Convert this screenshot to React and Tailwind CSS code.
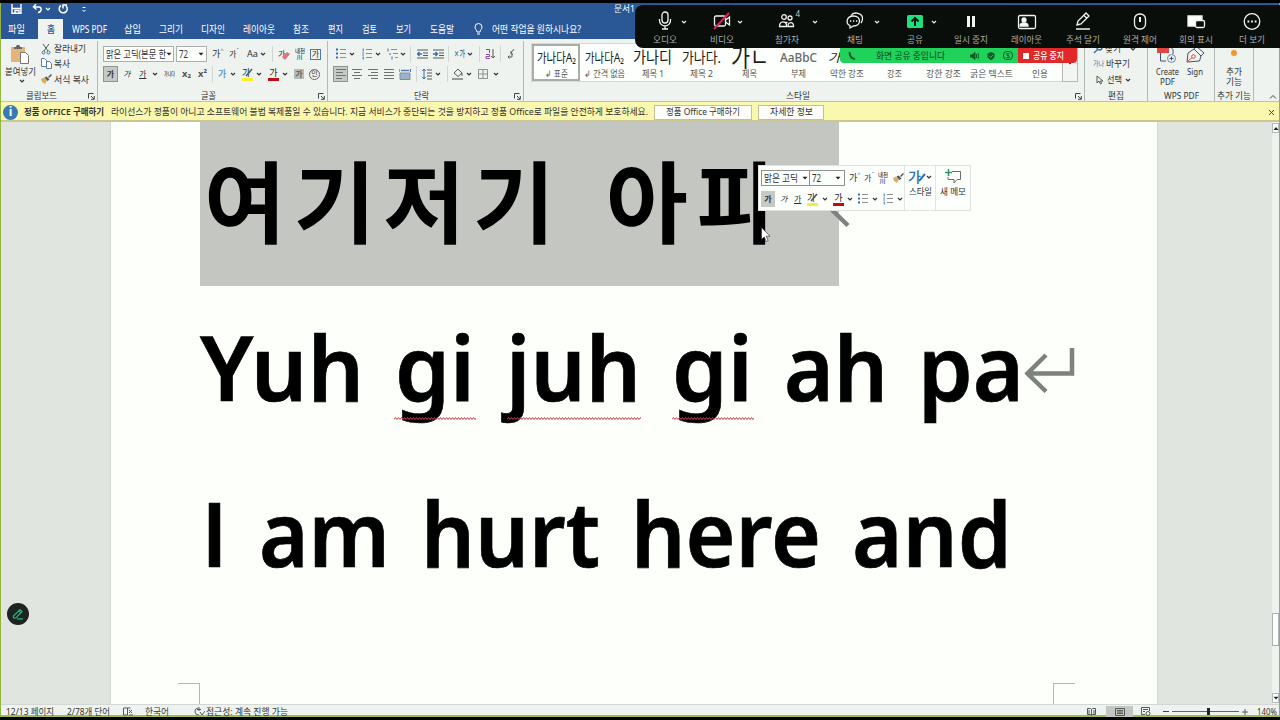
import React, { useLayoutEffect, useRef } from 'react';

// Text fitted horizontally to the width of its own box.
function Fit({ children, className = '' }) {
  const outer = useRef(null);
  const inner = useRef(null);
  useLayoutEffect(() => {
    inner.current.style.transform = 'none';
    const want = outer.current.getBoundingClientRect().width;
    const have = inner.current.getBoundingClientRect().width;
    inner.current.style.transform = `scaleX(${want / have})`;
  });
  return (
    <span ref={outer} className={`inline-block shrink-0 whitespace-nowrap text-left ${className}`}>
      <span ref={inner} className="inline-block origin-left whitespace-pre">{children}</span>
    </span>
  );
}

function Svg({ w = 12, h = 12, className = '', children, stroke = '#555b57', sw = 1 }) {
  return (
    <svg width={w} height={h} viewBox={`0 0 ${w} ${h}`} fill="none" stroke={stroke} strokeWidth={sw} className={`block shrink-0 ${className}`}>
      {children}
    </svg>
  );
}

const Chev = ({ className = '', stroke = '#333' }) => (
  <Svg w={6} h={6} stroke={stroke} sw={1.2} className={className}><path d="M1 2l2 2 2-2" /></Svg>
);
const Tri = ({ className = '' }) => (
  <Svg w={6} h={6} stroke="none" className={className}><path d="M.5 1.800h5L3 4.500z" fill="#222" /></Svg>
);
const Sep = ({ className = '' }) => <div className={`h-4 w-px shrink-0 bg-[#d0d5d1] ${className}`} />;
const Launcher = () => (
  <Svg w={7} h={7} stroke="#444"><path d="M.5 5.5v-5h5M3 3l3 3M6.3 3v3.3H3" /></Svg>
);

const Bullets = ({ className = '', numbered }) => (
  <Svg w={10} h={12} stroke="#8a908c" className={className}>
    <path d="M4 1.5h6M4 5.500h6M4 9.500h6" />
    {numbered ? <path d="M1.2 .5v3M.3 5h1.6M.3 7h1.6M1.2 8.5v3" stroke="#3a6fae" /> : <path d="M0 1.500h2M0 5.500h2M0 9.500h2" stroke="#3a6fae" strokeWidth="2" />}
  </Svg>
);
const Lines = ({ d, className = '' }) => <Svg w={10} h={12} stroke="#6c726e" className={className}><path d={d} /></Svg>;
const Brush = ({ className = '' }) => (
  <Svg w={11} h={11} stroke="none" className={className}>
    <path d="M0 5l3-1.5 3 3L4 10 1 8z" fill="#e0ac62" /><path d="M3.5 3.5l2-1 3 3-2 1.5z" fill="#555" /><path d="M7 3l3-3 1 1-3 3z" fill="#555" />
  </Svg>
);
const Highlight = ({ className = '' }) => (
  <div className={`flex h-[13px] w-[11px] shrink-0 flex-col justify-between ${className}`}>
    <div className="relative h-[9px] text-[9px] leading-[9px] text-[#222]">가
      <Svg w={11} h={10} stroke="#555" sw={1.6} className="absolute left-0 top-0"><path d="M10 1L4 8" /></Svg>
    </div>
    <div className="h-[3px] bg-[#f6ef2a]" />
  </div>
);
const FontColor = ({ className = '' }) => (
  <div className={`flex h-[13px] w-[11px] shrink-0 flex-col justify-between text-center text-[9px] leading-[9px] text-[#222] ${className}`}>
    <span>가</span><div className="h-[3px] bg-[#c00b12]" />
  </div>
);

const tabs = [
  ['WPS PDF', 'ml-[9px] w-[35px]'], ['삽입', 'ml-[17px] w-[17px]'], ['그리기', 'ml-[18px] w-[24px]'], ['디자인', 'ml-[18px] w-[24px]'],
  ['레이아웃', 'ml-[18px] w-[32px]'], ['참조', 'ml-[18px] w-[16px]'], ['편지', 'ml-[19px] w-[15px]'], ['검토', 'ml-[19px] w-[15px]'],
  ['보기', 'ml-[19px] w-[15px]'], ['도움말', 'ml-[19px] w-[24px]'],
];

function Header() {
  return (
    <header className="h-9 shrink-0 bg-[#2a5796] text-white">
      <div className="flex h-4 items-center pl-[10px]">
        <Svg w={11} h={10} stroke="#fff" sw={1.4} className="-mt-1"><path d="M1 0v9.300h9V0M1 4.500h9M4 9V6.500h4V9" /></Svg>
        <Svg w={11} h={10} stroke="#fff" sw={1.5} className="-mt-1 ml-[10px]"><path d="M4 0L1.5 3 4.5 5.5M1.5 3H7c3 0 3 5-1 5.500" /></Svg>
        <Chev stroke="#fff" className="-mt-1 ml-[2px]" />
        <Svg w={11} h={10} stroke="#fff" sw={1.5} className="-mt-1 ml-[7px]"><path d="M3 1.500a4 4 0 1 0 5 .5M5 4.500V1h4" /></Svg>
        <Svg w={6} h={7} stroke="#fff" className="-mt-[3px] ml-[12px]"><path d="M1.500 1.500h3M1.500 4l1.500 1.500L4.500 4" /></Svg>
        <Fit className="-mt-[5px] ml-[527px] w-[21px] text-[9px] leading-3">문서1</Fit>
      </div>
      <nav className="flex h-5 items-center pl-[7px] text-[10px] leading-5">
        <Fit className="w-[17px]">파일</Fit>
        <div className="ml-[13px] flex h-full w-[25px] justify-center bg-[#f0f4f1] font-medium text-[#2a5796]"><Fit className="w-[8px]">홈</Fit></div>
        {tabs.map(([t, c]) => <Fit key={t} className={c}>{t}</Fit>)}
        <Svg w={9} h={13} stroke="#fff" className="ml-5"><path d="M3 9C3 7 1 6.500 1 4a3.500 3.500 0 0 1 7 0C8 6.500 6 7 6 9zM3 11h3" /></Svg>
        <Fit className="ml-[9px] w-[89px]">어떤 작업을 원하시나요?</Fit>
      </nav>
    </header>
  );
}

const Group = ({ className, label, labelClass, launcher, children }) => (
  <section className={`flex h-[60px] shrink-0 flex-col border-r border-[#b3b9b4] ${className}`}>
    <div className="h-[48px] shrink-0">{children}</div>
    <div className="flex h-3 items-center">
      <span className="flex grow justify-center"><Fit className={`mt-[2px] leading-3 ${labelClass}`}>{label}</Fit></span>
      {launcher && <div className="mr-[2px] mt-[2px]"><Launcher /></div>}
    </div>
  </section>
);

const styles = [
  ['가나다A₂', '↲ 표준', 'text-[13px]', 'w-[39px]', 'w-[23px]'],
  ['가나다A₂', '↲ 간격 없음', 'text-[13px]', 'w-[39px]', 'w-[41px]'],
  ['가나디', '제목 1', 'text-[16px]', 'w-[39px]', 'w-[22px]'],
  ['가나다.', '제목 2', 'text-[15px]', 'w-[39px]', 'w-[23px]'],
  ['가ㄴ', '제목', 'text-[26px]', 'w-[38px]', 'w-[15px]'],
  ['AaBbC', '부제', 'text-[13px] font-medium text-[#666] line-through', 'w-[37px]', 'w-[15px]'],
  ['가나다', '약한 강조', 'text-[12px] italic', 'w-[37px]', 'w-[34px]'],
  ['', '강조', 'text-[12px]', 'w-[37px]', 'w-[15px]'],
  ['', '강한 강조', 'text-[12px]', 'w-[37px]', 'w-[35px]'],
  ['', '굵은 텍스트', 'text-[12px]', 'w-[37px]', 'w-[43px]'],
  ['', '인용', 'text-[12px]', 'w-[37px]', 'w-[16px]'],
];

function Ribbon() {
  return (
    <div className="flex h-[63px] shrink-0 border-b border-[#c9c58e] bg-[#eff3f0] pt-[2px] text-[9px] leading-3 text-[#333]">
      <Group className="w-[97px]" label="클립보드" labelClass="ml-[-7px] w-[31px]" launcher>
        <div className="flex">
          <div className="flex w-[38px] flex-col items-center pt-[3px]">
            <Svg w={20} h={21} stroke="none"><path d="M1 3h14v15H1z" fill="#e3b579" /><path d="M4 3h2c0-3 4-3 4 0h2v2H4z" fill="#666" /><path d="M10.500 8.500h5l3 3v8h-8z" fill="#fff" stroke="#777" /></Svg>
            <Fit className="mt-px w-[31px] leading-[11px]">붙여넣기</Fit>
            <Chev className="ml-1 mt-px" />
          </div>
          <div className="flex flex-col pl-[2px] text-[9.5px]">
            <div className="flex h-[15px] items-center"><Svg w={10} h={12}><path d="M2 1l5 7M8 1L3 8" /><circle cx="2.500" cy="9.500" r="1.500" stroke="#3a6fae" /><circle cx="7.500" cy="9.500" r="1.500" stroke="#3a6fae" /></Svg><Fit className="ml-[3px] w-[32px]">잘라내기</Fit></div>
            <div className="flex h-[15px] items-center"><Svg w={11} h={11}><path d="M.5.5h3l2 2v6h-5zM5.500 3.500h3l2 2v5h-5z" fill="#fff" stroke="#5c7ea8" /></Svg><Fit className="ml-[2px] w-[16px]">복사</Fit></div>
            <div className="flex h-[17px] items-center"><Brush /><Fit className="ml-[2px] w-[35px]">서식 복사</Fit></div>
          </div>
        </div>
      </Group>

      <Group className="w-[230px]" label="글꼴" labelClass="w-[15px]" launcher>
        <div className="flex h-[25px] items-center pl-[5px] pt-[1px]">
          <div className="flex h-4 w-[71px] items-center justify-between overflow-hidden border border-[#aab0ab] bg-[#fcfffc] pl-[2px] pr-[1px]"><Fit className="w-[60px] text-[10px]">맑은 고딕(본문 한</Fit><Tri /></div>
          <div className="ml-[2px] flex h-4 w-[31px] items-center justify-between border border-[#aab0ab] bg-[#fcfffc] pl-[2px] pr-[2px] text-[10px]"><Fit className="w-[9px]">72</Fit><Tri /></div>
          <div className="ml-[5px] flex w-[10px] text-[9px]">가<span className="-mt-1 text-[6px] text-[#3a6fae]">^</span></div>
          <div className="ml-[7px] flex w-[10px] text-[8px]">가<span className="-mt-1 text-[6px] text-[#3a6fae]">ˇ</span></div>
          <Fit className="ml-2 w-[11px] text-[9.5px]">Aa</Fit><Chev className="ml-[2px]" />
          <Sep className="ml-[6px]" />
          <div className="relative ml-[5px] w-3 text-[8px]">가<Svg w={8} h={8} stroke="none" className="absolute left-[4px] top-[4px]"><path d="M0 5l5-5 3 2-5 6z" fill="#e56e80" /></Svg></div>
          <div className="ml-[4px] flex w-[11px] flex-col items-center text-[6px] leading-[6px]"><Fit className="w-[10px] font-medium">내천</Fit><span className="font-bold text-[#3a6fae]">川</span></div>
          <div className="ml-[5px] flex h-[11px] w-[11px] items-center justify-center border border-[#4f79a8] text-[8px]">가</div>
        </div>
        <div className="flex h-4 items-center pl-[5px]">
          <div className="flex h-4 w-[15px] items-center justify-center border border-[#8e9490] bg-[#c6cac6] text-[8px] font-bold">가</div>
          <span className="ml-[5px] w-[8px] text-[8px] italic">가</span>
          <span className="ml-[8px] w-[8px] text-[8px] leading-[10px] underline">가</span>
          <Chev className="ml-[5px]" />
          <Fit className="ml-[6px] w-[11px] text-[6px] font-medium line-through">가나다</Fit>
          <Fit className="ml-[7px] w-[9px] font-bold text-[#555]">x₂</Fit>
          <Fit className="ml-[7px] w-[9px] font-bold text-[#555]">x²</Fit>
          <Sep className="ml-[5px]" />
          <span className="ml-[5px] w-[9px] text-[9px] font-bold text-[#6d9dcb]">가</span><Chev className="ml-[3px]" />
          <Highlight className="ml-[6px]" /><Chev className="ml-[3px]" />
          <FontColor className="ml-[6px]" /><Chev className="ml-[3px]" />
          <span className="ml-[6px] flex h-[10px] w-[10px] items-center justify-center bg-[#b6bab6] text-[8px]">가</span>
          <span className="ml-[5px] flex h-[11px] w-[11px] items-center justify-center rounded-full border border-[#666] text-[7px]">인</span>
        </div>
      </Group>

      <Group className="w-[196px]" label="단락" labelClass="w-[15px]" launcher>
        <div className="flex h-[25px] items-center pl-[8px] pt-[1px]">
          <Bullets /><Chev className="ml-[3px]" />
          <Bullets numbered className="ml-[7px]" /><Chev className="ml-[3px]" />
          <Svg w={11} h={12} stroke="#8a908c" className="ml-[6px]"><path d="M4 1.500h6M6 5.500h5M8 9.500h3" /><path d="M1 .5v3M3 5v2M5 8.500v3" stroke="#3a6fae" /></Svg><Chev className="ml-[2px]" />
          <Sep className="ml-[4px]" />
          <Svg w={11} h={10} className="ml-[6px]"><path d="M0 1h11M6 4h5M6 6.500h5M0 9h11" /><path d="M5 5H.5M2.500 3l-2 2 2 2" stroke="#2f6eb3" strokeWidth="1.300" /></Svg>
          <Svg w={11} h={10} className="ml-[5px]"><path d="M0 1h11M6 4h5M6 6.500h5M0 9h11" /><path d="M0 5h4.500M2.500 3l2 2-2 2" stroke="#2f6eb3" strokeWidth="1.300" /></Svg>
          <Sep className="ml-[4px]" />
          <Fit className="ml-[5px] w-[11px] text-[9px]"><span className="text-[#2f6eb3]">✕</span>가</Fit><Chev className="ml-[2px]" />
          <Sep className="ml-[6px]" />
          <Svg w={10} h={12} className="ml-[5px]"><path d="M8 1v9M6 8l2 2 2-2" /><path d="M1 1.500h3.500V5" stroke="#2f6eb3" /><path d="M1 6.500h3.500v2H1v2h4" stroke="#8b4b9d" /></Svg>
          <Sep className="ml-[5px]" />
          <Svg w={8} h={11} className="ml-[6px]"><path d="M7 0L4 4M4 2v3h2M5 5v3H1M2.500 6.500L1 8l1.500 1.500" /></Svg>
        </div>
        <div className="flex h-4 items-center pl-[5px]">
          <div className="flex h-4 w-[15px] items-center justify-center border border-[#8e9490] bg-[#c6cac6]"><Lines d="M0 1.500h10M0 4.500h7M0 7.500h10M0 10.500h6" /></div>
          <Lines className="ml-[4px]" d="M0 1.500h10M2 4.500h6M0 7.500h10M2 10.500h6" />
          <Lines className="ml-[6px]" d="M0 1.500h10M3 4.500h7M0 7.500h10M3 10.500h7" />
          <Lines className="ml-[6px]" d="M0 1.500h10M0 4.500h10M0 7.500h10M0 10.500h10" />
          <Svg w={12} h={12} className="ml-[5px]" stroke="#4d7fb5"><path d="M0 1v3M11.500 1v3M2 2.500h8" strokeWidth="1.400" /><path d="M1 5h10v6.500H1z" fill="#9db2c8" stroke="#7d8fa3" /></Svg>
          <Sep className="ml-[5px]" />
          <Svg w={10} h={12} className="ml-[5px]"><path d="M5 2h5M5 5h5M5 8h5M5 11h5" /><path d="M2 1.500v9M.3 3L2 1l1.700 2M.3 9L2 11l1.700-2" stroke="#2f6eb3" /></Svg><Chev className="ml-[3px]" />
          <Sep className="ml-[6px]" />
          <Svg w={12} h={12} className="ml-[4px]"><path d="M2 5l4-4 4 4-4 3.500zM10 5v3" /><path d="M0 11h11" stroke="#999" strokeWidth="2" /></Svg><Chev className="ml-[2px]" />
          <Svg w={10} h={10} stroke="#8c928d" className="ml-[6px]"><path d="M.5.5h9v9h-9zM5 .5v9M.5 5h9" /></Svg><Chev className="ml-[5px]" />
        </div>
      </Group>

      <Group className="w-[561px]" label="스타일" labelClass="ml-[-4px] w-[24px]" launcher>
        <div className="flex pl-[7px] pt-[2px]">
          <div className="flex h-[39px] w-[531px] overflow-hidden border-y border-l border-[#d5d9d5] bg-[#fcfffb]">
            {styles.map(([s, n, c, w, nw], i) => (
              <div key={i} className={`flex w-[48.4px] shrink-0 flex-col items-center ${i === 0 ? 'h-[37px] border-2 border-[#a9ada9]' : 'pt-[2px]'}`}>
                <div className={`flex h-[21px] items-center text-[#1c1c1c] ${c}`}>{s && <Fit className={`mt-[2px] leading-[21px] ${w}`}>{s}</Fit>}</div>
                <Fit className={`mt-px leading-3 text-[#555] ${nw}`}>{n}</Fit>
              </div>
            ))}
          </div>
          <div className="flex h-[39px] w-[16px] items-center justify-center border border-[#b5bab6] bg-[#f2f5f2]"><Tri /></div>
        </div>
      </Group>

      <Group className="w-[63px]" label="편집" labelClass="w-[16px]">
        <div className="flex flex-col pl-[8px] text-[9.5px]">
          <div className="flex h-[15px] items-center"><Svg w={10} h={10} stroke="#3a6fae" sw={1.500}><path d="M1 9l4-4" /><circle cx="6.500" cy="3.500" r="2.500" /></Svg><Fit className="ml-[2px] w-[16px]">찾기</Fit><Chev className="ml-[9px]" /></div>
          <div className="flex h-[16px] items-center"><Fit className="w-[11px] text-[7px] text-[#3a6fae]">가나</Fit><Fit className="ml-[2px] w-[24px]">바꾸기</Fit></div>
          <div className="flex h-[15px] items-center"><Svg w={8} h={10} className="ml-[3px]"><path d="M1 1v7l2-2 1.500 3 1-.5L4.500 6H7z" /></Svg><Fit className="ml-[3px] w-[15px]">선택</Fit><Chev className="ml-[3px]" /></div>
        </div>
      </Group>

      <Group className="w-[67px]" label="WPS PDF" labelClass="w-[35px]">
        <div className="flex pl-[7px] pt-[4px]">
          <div className="flex w-[24px] flex-col items-center">
            <Svg w={20} h={21} stroke="#43526c"><path d="M3 .5h9l4 4V9M3.500 5v11H9" /><path d="M0 3h12v5H0z" fill="#e2453d" stroke="none" /><circle cx="14.500" cy="13.500" r="4" stroke="#6a88ab" /><path d="M12.500 13.500h4M14.500 11.500v4" /></Svg>
            <Fit className="mt-px w-[23px] leading-[10px]">Create</Fit><Fit className="w-[15px] leading-[10px]">PDF</Fit>
          </div>
          <div className="ml-[6px] flex w-[20px] flex-col items-center">
            <Svg w={20} h={21} stroke="#43526c"><path d="M9 4l7 7M11 1l8 7-3 3-1.500 5L2 17l1-9 6-4z" /><circle cx="8.500" cy="11.500" r="1.800" stroke="#e2453d" /><path d="M2 17l5-4.500" stroke="#e2453d" /></Svg>
            <Fit className="mt-px w-[16px] leading-[10px]">Sign</Fit>
          </div>
        </div>
      </Group>

      <Group className="w-[39px]" label="추가 기능" labelClass="w-[34px]">
        <div className="flex flex-col items-center">
          <div className="mt-[9px] h-[6px] w-[6px] rounded-full bg-[#f0962c]" />
          <Fit className="mt-[11px] w-[16px] leading-[10px]">추가</Fit><Fit className="w-[16px] leading-[10px]">기능</Fit>
        </div>
      </Group>
      <div className="flex grow items-end justify-end pb-[1px] pr-[2px]"><Svg w={8} h={6} stroke="#444"><path d="M1 4.500l3-3 3 3" /></Svg></div>
    </div>
  );
}

function NoticeBar() {
  return (
    <div className="flex h-5 shrink-0 items-center border-b-2 border-[#cbc795] bg-[#faf7ae] pl-[2px] pt-[2px] text-[9.5px] text-[#333]">
      <div className="flex h-[15px] w-[15px] items-center justify-center rounded-full bg-[#3779b5] font-sans text-[12px] font-bold leading-[14px] text-white">i</div>
      <Fit className="ml-[6px] w-[80px] font-semibold">정품 OFFICE 구매하기</Fit>
      <Fit className="ml-[7px] w-[537px]">라이선스가 정품이 아니고 소프트웨어 불법 복제품일 수 있습니다. 지금 서비스가 중단되는 것을 방지하고 정품 Office로 파일을 안전하게 보호하세요.</Fit>
      <div className="ml-[6px] flex h-[15px] w-[98px] items-center justify-center border border-[#c3c19c] bg-[#fdfefa]"><Fit className="w-[74px]">정품 Office 구매하기</Fit></div>
      <div className="ml-[6px] flex h-[15px] w-[66px] items-center justify-center border border-[#c3c19c] bg-[#fdfefa]"><Fit className="w-[43px]">자세한 정보</Fit></div>
      <Svg w={7} h={7} stroke="#444" className="ml-auto mr-[4px]"><path d="M1 1l5 5M6 1L1 6" /></Svg>
    </div>
  );
}

const Enter = ({ className }) => (
  <Svg w={52} h={46} stroke="#7e827e" sw={4.500} className={className}><path d="M48 0v25.500H4M22 7L3.500 25.500 22 43.500" /></Svg>
);
const Wavy = ({ className }) => (
  <div className={`absolute bottom-[32px] h-[3px] overflow-hidden ${className}`}>
    <Svg w={140} h={3} stroke="#cf3a42" sw={1}><path d={'M0 2.500' + 'l1.500-2l1.500 2'.repeat(46)} /></Svg>
  </div>
);

function DocumentArea() {
  return (
    <main className="relative flex h-[582px] shrink-0 bg-[#e1e5e0]">
      <div className="ml-[109px] flex w-[1048px] flex-col border-x border-[#d3d7d2] bg-[#fcfffa] text-[90px] font-semibold text-black">
        <div className="ml-[89px] h-[164px] w-[639px] bg-[#c4c7c1]">
          <div className="relative flex whitespace-nowrap pl-1 font-['Noto_Sans_CJK_KR'] text-[89px] font-bold leading-[152px] tracking-[7.8px]">
            <span className="w-[359px] shrink-0">여기저기</span>
            <span className="ml-[43px] w-[181px] shrink-0 tracking-[9px]">아파</span>
            <Enter className="absolute left-[626px] top-[60px]" />
          </div>
        </div>
        <div className="relative ml-[89px] flex h-[166px] leading-[161px] [-webkit-text-stroke:0.7px_black]">
          <Fit className="w-[164px]">Yuh</Fit>
          <Fit className="ml-[31px] w-[80px]">gi</Fit>
          <Fit className="ml-[31px] w-[135px]">juh</Fit>
          <Fit className="ml-[31px] w-[81px]">gi</Fit>
          <Fit className="ml-[31px] w-[104px]">ah</Fit>
          <Fit className="ml-[30px] w-[106px]">pa</Fit>
          <Enter className="mt-[62px]" />
          <Wavy className="left-[194px] w-[82px]" />
          <Wavy className="left-[307px] w-[134px]" />
          <Wavy className="left-[472px] w-[82px]" />
        </div>
        <div className="ml-[89px] flex h-[166px] items-baseline leading-[160px] [-webkit-text-stroke:0.7px_black]">
          <Fit className="ml-[4px] w-[21px] font-['Liberation_Sans'] text-[92px] font-bold">I</Fit>
          <Fit className="ml-[34px] w-[131px]">am</Fit>
          <Fit className="ml-[31px] w-[179px]">hurt</Fit>
          <Fit className="ml-[31px] w-[190px]">here</Fit>
          <Fit className="ml-[31px] w-[160px]">and</Fit>
        </div>
        <div className="mt-auto flex h-[21px] justify-between pl-[67px] pr-[82px]">
          <div className="w-[22px] border-r border-t border-[#b4b8b3]" />
          <div className="w-[22px] border-l border-t border-[#b4b8b3]" />
        </div>
      </div>
      <div className="ml-auto flex w-[7px] flex-col bg-[#eef1ed]">
        <div className="mt-px flex h-[10px] items-center justify-center border border-[#b5b9b5] bg-white"><Svg w={6} h={5} stroke="none"><path d="M.5 4h5L3 1z" fill="#222" /></Svg></div>
        <div className="mt-[480px] h-[33px] border border-[#adb1ad] bg-white" />
        <div className="mb-px mt-auto flex h-[10px] items-center justify-center border border-[#b5b9b5] bg-white"><Tri /></div>
      </div>

      <button className="absolute left-[6px] top-[481px] flex h-[22px] w-[22px] items-center justify-center rounded-full bg-[#1d2321]">
        <Svg w={12} h={12} stroke="#25b57c" sw={1.200}><path d="M1.500 8L8 1.500l2 2L4 10H1.500zM5 10.800h6M6.800 2.800l2 2" /></Svg>
      </button>

      <div className="absolute left-[757px] top-[43px] flex h-[46px] w-[213px] border border-[#dfe3df] bg-[#fdfffc] text-[9px] leading-3 text-[#333]">
        <div className="flex w-[146px] flex-col border-r border-[#e3e6e3]">
          <div className="flex h-[24px] items-center pl-[2px]">
            <div className="flex h-4 w-[49px] items-center justify-between border border-[#8d928e] pl-[2px] pr-px"><Fit className="w-[34px] text-[10px]">맑은 고딕</Fit><Tri /></div>
            <div className="-ml-px flex h-4 w-[36px] items-center justify-between border border-[#8d928e] pl-[2px] pr-[3px] text-[10px]"><Fit className="w-[9px]">72</Fit><Tri /></div>
            <div className="ml-[4px] flex w-[10px]">가<span className="-mt-1 text-[6px] text-[#3a6fae]">^</span></div>
            <div className="ml-[5px] flex w-[9px] text-[8px]">가<span className="-mt-1 text-[6px] text-[#3a6fae]">ˇ</span></div>
            <div className="ml-[4px] flex w-[11px] flex-col items-center text-[6px] leading-[6px]"><Fit className="w-[10px] font-medium">내천</Fit><span className="font-bold text-[#3a6fae]">川</span></div>
            <Brush className="ml-[5px]" />
          </div>
          <div className="flex h-[18px] items-center pl-[2px]">
            <div className="flex h-4 w-[14px] items-center justify-center bg-[#c6c9c6] text-[8px] font-bold">가</div>
            <span className="ml-[5px] w-[8px] text-[8px] italic">가</span>
            <span className="ml-[6px] w-[8px] text-[8px] leading-[10px] underline">가</span>
            <Highlight className="ml-[5px]" /><Chev className="ml-[4px]" />
            <FontColor className="ml-[5px]" /><Chev className="ml-[3px]" />
            <Bullets className="ml-[5px]" /><Chev className="ml-[4px]" />
            <Bullets numbered className="ml-[5px]" /><Chev className="ml-[4px]" />
          </div>
        </div>
        <div className="flex w-[31px] flex-col items-center border-r border-[#e3e6e3] pt-[3px]">
          <div className="relative flex h-[16px] w-[24px] items-center text-[14px] font-medium text-[#2f6eb3]">가
            <Svg w={14} h={14} stroke="#3d6e9e" sw={2} className="absolute left-[6px] top-[2px]"><path d="M11 3L5 10" /></Svg>
            <Chev className="ml-auto" />
          </div>
          <Fit className="mt-px w-[23px]">스타일</Fit>
        </div>
        <div className="flex grow flex-col items-center pt-[3px]">
          <Svg w={17} h={16} stroke="#6a706b"><path d="M7 2.500h8.500v8H12l-3 3.500v-3.500H3V8" /><path d="M3.500 0v7M0 3.500h7" stroke="#2f9a67" strokeWidth="1.600" /></Svg>
          <Fit className="mt-px w-[26px]">새 메모</Fit>
        </div>
      </div>
      <Svg w={11} h={17} stroke="#222" sw={0.600} className="absolute left-[760px] top-[105px]"><path d="M.5.5v12l2.700-2.500 2 4.500 2-.9-2-4.400h3.800z" fill="#fff" /></Svg>
    </main>
  );
}

function StatusBar() {
  return (
    <footer className="flex h-[13px] shrink-0 items-center border-b-2 border-t border-b-[#9dbb57] border-t-[#d4d8d4] bg-[#eff3f0] pl-[5px] pt-[3px] text-[9px] leading-[10px] text-[#333]">
      <Fit className="w-[48px]">12/13 페이지</Fit>
      <Fit className="ml-[13px] w-[43px]">2/78개 단어</Fit>
      <Svg w={11} h={9} className="ml-[13px]"><path d="M.5 1h4v7h-4zM4.500 1h3M6 3l3 3M9 3L6 6M6 8h4" /></Svg>
      <Fit className="ml-[11px] w-[24px]">한국어</Fit>
      <Svg w={11} h={9} className="ml-[25px]"><path d="M4 1a3.500 3.500 0 1 0 1 7M5 0v4M3 2.500h4M6 5l2 3 3-4" /></Svg>
      <Fit className="ml-px w-[82px]">접근성: 계속 진행 가능</Fit>
      <div className="ml-auto flex items-center">
        <Svg w={9} h={8}><path d="M.5.5h3l1 1 1-1h3v6h-3l-1 1-1-1h-3zM4.500 1v6M2 2v4M7 2v4" /></Svg>
        <div className="ml-[10px] flex h-[11px] w-[27px] items-center justify-center bg-[#c3c7c3]"><Svg w={10} h={8}><path d="M.5.5h9v7h-9zM2 2.500h6M2 4h6M2 5.500h6" /></Svg></div>
        <Svg w={10} h={9} className="ml-[8px]"><path d="M4 7.500H.5v-7h8V4M2 2.500h5M2 4.500h2" /><circle cx="7" cy="6.500" r="2" /></Svg>
        <div className="ml-[12px] h-px w-[6px] bg-[#444]" />
        <div className="ml-[3px] flex h-[8px] w-[67px] items-center justify-center"><div className="h-px w-[35px] bg-[#666]" /><div className="h-[7px] w-[3px] bg-[#222]" /><div className="h-px grow bg-[#666]" /></div>
        <Svg w={6} h={6} className="ml-[3px]"><path d="M0 3h6M3 0v6" /></Svg>
        <Fit className="ml-[9px] mr-[2px] w-[20px]">140%</Fit>
      </div>
    </footer>
  );
}

const meet = [
  ['오디오', 'ml-[5px]', 'w-[24px]', <><rect x="7" y="1" width="6" height="11" rx="3" /><path d="M4.500 8v1.500a5.500 5.500 0 0 0 11 0V8M10 15v3M7 18h6" /></>, 'right-[3px]'],
  ['비디오', 'ml-[7px]', 'w-[24px]', <><rect x="2.500" y="5" width="11" height="10" rx="1.500" /><path d="M13.500 9l4-3v8l-4-3" /><path d="M2 18L17 2" stroke="#dc2454" strokeWidth="2" /></>, 'right-[4px]'],
  ['참가자', 'ml-[14.5px]', 'w-[24px]', <><circle cx="7" cy="6" r="2.300" /><circle cx="13" cy="7" r="2" /><path d="M2.500 15.500c0-6 7-6 7-1v1zM11 15.500c-.5-5 5.500-5 5.500-1v1zM8.500 11.500l2 0" /></>, 'right-[-6px]'],
  ['채팅', 'ml-[18.5px]', 'w-[16px]', <><path d="M6 4.500C9 0 18 2 17.500 8c0 2-.7 3-1.500 4" /><path d="M8.500 5C1 5 .5 13 5 14.500l0 2.500 3.500-2c8 0 8-10 0-10z" /><path d="M5 10h1.300M8 10h1.300M11 10h1.300" strokeWidth="1.600" /></>, 'right-[0px]'],
  ['공유', 'ml-[9.5px]', 'w-[16px]', <><rect x="2" y="4" width="16" height="13" rx="1.500" fill="#1fe07f" stroke="none" /><path d="M10 15V8M6.500 10.500L10 7l3.500 3.500" stroke="#08150e" strokeWidth="2" /></>, 'right-[3px]'],
  ['일시 중지', 'ml-[6px]', 'w-[34px]', <path d="M7.500 5v11M12.500 5v11" strokeWidth="3" />],
  ['레이아웃', 'ml-[6px]', 'w-[31px]', <><rect x="1.500" y="4.500" width="17" height="13" rx="1.500" /><circle cx="7" cy="9" r="2" fill="#fff" /><path d="M3 15c0-4 8-4 8 0z" fill="#fff" /></>],
  ['주석 달기', 'ml-[6.5px]', 'w-[34px]', <path d="M4 14l1-4 8-8 3 3-8 8zM3 18h14M11 4.500l3 3" />],
  ['원격 제어', 'ml-[6.5px]', 'w-[34px]', <><rect x="4.500" y="3" width="11" height="15" rx="5" /><path d="M10 6v5" strokeWidth="2" /></>],
  ['회의 표시', 'ml-[6px]', 'w-[34px]', <><path d="M2 5h14v4H9v6H2z" fill="#fff" /><rect x="9.500" y="9.500" width="9" height="7" rx="1.500" fill="#0a0e0b" /></>],
  ['더 보기', 'ml-[6.5px]', 'w-[26px]', <><circle cx="10" cy="10.500" r="7.800" /><path d="M5.500 10.500h1.800M9.100 10.500h1.800M12.700 10.500h1.800" strokeWidth="1.800" /></>],
];

function MeetingBar() {
  return (
    <div className="absolute left-[635px] top-[5px] w-[645px]">
      <div className="flex h-[43px] rounded-l-lg bg-[#0a0e0b]">
        {meet.map(([label, ml, w, icon, chev]) => (
          <div key={label} className={`relative flex w-[50px] shrink-0 flex-col items-center pt-[6px] ${ml}`}>
            <Svg w={20} h={20} stroke="#f2f4f2" sw={1.300}>{icon}</Svg>
            <Fit className={`mt-[3px] text-[9px] leading-3 text-[#a9ada9] ${w}`}>{label}</Fit>
            {chev && <Chev stroke="#eee" className={`absolute top-[14px] ${chev}`} />}
            {label === '참가자' && <span className="absolute left-[34px] top-[4px] text-[8px] leading-[10px] text-[#ccc]">4</span>}
          </div>
        ))}
      </div>
      <div className="ml-[205px] flex h-[15px] w-[237px] overflow-hidden rounded-b text-[9px] leading-[15px]">
        <div className="flex w-[178px] items-center bg-[#20d25a] text-[#0b4420]">
          <Svg w={8} h={9} stroke="#0c5a27" sw={2} className="ml-[8px]"><path d="M1.500 1c0 4 2 6.500 5.500 7" /></Svg>
          <Fit className="ml-[20px] w-[69px]">화면 공유 중입니다</Fit>
          <Svg w={9} h={8} stroke="#0c5a27" className="ml-[25px]"><path d="M0 3h2l3-2.500v7L2 5H0z" fill="#0c5a27" /><path d="M6.500 2v4M8.300 1v6" /></Svg>
          <Svg w={8} h={8} stroke="none" className="ml-[8px]"><path d="M4 0l3.500 1.500v3C7.500 6 5 8 4 8S.5 6 .5 4.500v-3z" fill="#0c5a27" /><path d="M2.200 4l1.300 1.300L6 3" stroke="#20d25a" /></Svg>
          <div className="ml-[8px] flex h-[9px] w-[10px] items-center justify-center rounded-sm border border-[#0c5a27] text-[7px] leading-[8px]">$</div>
        </div>
        <div className="flex grow items-center bg-[#e02828] text-white"><div className="ml-[5px] h-[6px] w-[6px] bg-white" /><Fit className="ml-[4px] w-[31px] font-medium">공유 중지</Fit></div>
      </div>
    </div>
  );
}

export default function App() {
  return (
    <div className="relative flex h-[720px] w-[1280px] flex-col overflow-hidden bg-black pt-[3px] font-['Noto_Sans','Noto_Sans_CJK_KR',sans-serif]">
      <div className="flex flex-col border-x border-[#93b43f]">
        <Header />
        <Ribbon />
        <NoticeBar />
        <DocumentArea />
        <StatusBar />
      </div>
      <MeetingBar />
    </div>
  );
}
